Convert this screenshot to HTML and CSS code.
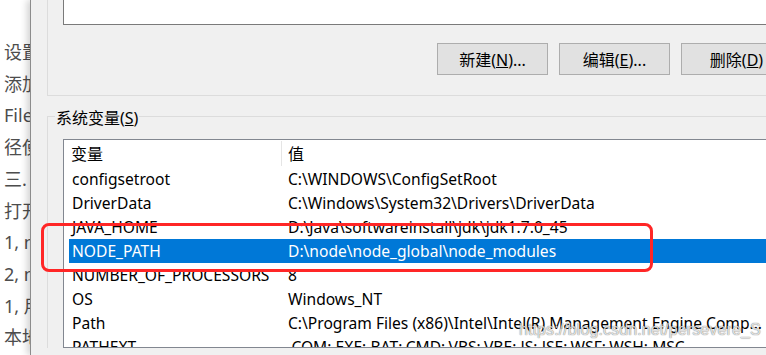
FILE: index.html
```html
<!DOCTYPE html>
<html lang="zh-CN">
<head>
    <meta charset="UTF-8">
    <title>环境变量</title>
    <link rel="stylesheet" href="styles.css">
</head>
<body>

<div class="screen">
    <div class="blog">
        <p>设置环境变量</p>
        <p>添加系统变量</p>
        <p>File</p>
        <p>径使用</p>
        <p>三. 测试</p>
        <p>打开</p>
        <p>1, npm</p>
        <p>2, npm</p>
        <p>1, 用户</p>
        <p>本地</p>
    </div>

    <div class="dialog">
        <div class="group user-group">
            <div class="listbox"></div>
            <div class="buttons">
                <button class="btn">新建(<u>N</u>)...</button>
                <button class="btn">编辑(<u>E</u>)...</button>
                <button class="btn">删除(<u>D</u>)</button>
            </div>
        </div>

        <div class="group sys-group">
            <span class="group-title">系统变量(<u>S</u>)</span>
            <div class="listview">
                <div class="lv-head">
                    <div class="name">变量</div>
                    <div class="value">值</div>
                </div>
                <div class="lv-row"><span class="name">configsetroot</span><span class="value">C:\WINDOWS\ConfigSetRoot</span></div>
                <div class="lv-row"><span class="name">DriverData</span><span class="value">C:\Windows\System32\Drivers\DriverData</span></div>
                <div class="lv-row"><span class="name">JAVA_HOME</span><span class="value">D:\Java\softwareinstall\jdk\jdk1.7.0_45</span></div>
                <div class="lv-row selected"><span class="name">NODE_PATH</span><span class="value">D:\node\node_global\node_modules</span></div>
                <div class="lv-row"><span class="name">NUMBER_OF_PROCESSORS</span><span class="value">8</span></div>
                <div class="lv-row"><span class="name">OS</span><span class="value">Windows_NT</span></div>
                <div class="lv-row"><span class="name">Path</span><span class="value">C:\Program Files (x86)\Intel\Intel(R) Management Engine Comp...</span></div>
                <div class="lv-row"><span class="name">PATHEXT</span><span class="value">.COM;.EXE;.BAT;.CMD;.VBS;.VBE;.JS;.JSE;.WSF;.WSH;.MSC</span></div>
            </div>
        </div>
    </div>

    <div class="mark"></div>
    <div class="watermark">https://blog.csdn.net/persevere_S</div>
</div>

</body>
</html>
```

FILE: styles.css
```css
body {
    margin: 0;
    font-family: "Noto Sans", "Noto Sans CJK SC", sans-serif;
    background: #fff;
}
.screen {
    position: relative;
    display: flex;
    width: 766px;
    height: 355px;
    overflow: hidden;
    background: #fff;
}
.blog {
    flex: 0 0 30px;
    box-sizing: border-box;
    padding: 37px 0 0 4px;
    overflow: hidden;
    white-space: nowrap;
    font-family: "Noto Sans", "Noto Sans CJK SC", sans-serif;
    font-size: 18px;
    line-height: 31.7px;
    color: #4d4d4d;
}
.blog p {
    margin: 0;
}
.dialog {
    position: relative;
    z-index: 1;
    flex: 1;
    min-width: 0;
    padding-left: 16px;
    overflow: hidden;
    background: #f0f0f0;
    border-left: 1px solid #8c8c8c;
    box-shadow: -3px 0 7px rgba(0,0,0,0.18);
    font-size: 16px;
    color: #000;
}
.group {
    border-left: 1px solid #dcdcdc;
    padding-left: 15px;
}
.user-group {
    height: 95px;
    border-bottom: 1px solid #dcdcdc;
}
.listbox {
    width: 760px;
    height: 24px;
    background: #fff;
    border-left: 1px solid #7a7a7a;
    border-bottom: 1px solid #7a7a7a;
}
.buttons {
    display: flex;
    gap: 11px;
    margin: 18px 0 0 374px;
}
.btn {
    flex-shrink: 0;
    width: 111px;
    height: 32px;
    padding: 0;
    box-sizing: border-box;
    background: #e1e1e1;
    border: 1px solid #adadad;
    font-family: "Noto Sans", "Noto Sans CJK SC", sans-serif;
    font-size: 16px;
    color: #000;
}
.sys-group {
    margin-top: 20px;
    border-top: 1px solid #dcdcdc;
}
.group-title {
    display: block;
    width: max-content;
    margin: -9px 0 0 -8px;
    padding: 0 1px;
    line-height: 20px;
    background: #f0f0f0;
}
.listview {
    width: 720px;
    height: 207px;
    margin-top: 11px;
    background: #fff;
    border: 1px solid #828790;
    overflow: hidden;
    font-size: 15.6px;
}
.lv-head {
    display: flex;
    height: 27px;
    font-size: 16px;
}
.lv-head .name {
    width: 217px;
    box-sizing: border-box;
    padding-left: 7px;
    line-height: 29px;
}
.lv-head .value {
    height: 25px;
    margin-top: 1px;
    padding-left: 6px;
    border-left: 1px solid #e5e5e5;
    line-height: 27px;
}
.lv-row {
    display: flex;
    height: 24px;
    margin-left: 5px;
    line-height: 24px;
    white-space: nowrap;
}
.lv-row .name {
    flex-shrink: 0;
    width: 212px;
    box-sizing: border-box;
    padding-left: 3px;
}
.lv-row .value {
    padding-left: 7px;
}
.lv-row.selected {
    background: #0078d7;
    color: #fff;
}
.mark {
    position: absolute;
    z-index: 2;
    left: 41px;
    top: 223px;
    width: 612px;
    height: 49px;
    box-sizing: border-box;
    border: 3px solid #ff2626;
    border-radius: 8px;
}
.watermark {
    position: absolute;
    z-index: 2;
    left: 519px;
    top: 321px;
    font-family: "Liberation Sans", Arial, sans-serif;
    font-size: 16px;
    letter-spacing: 0.1px;
    color: rgba(255,255,255,0.8);
    text-shadow: 0 0 1px rgba(0,0,0,0.5), 0 0 1px rgba(0,0,0,0.3);
}
```
